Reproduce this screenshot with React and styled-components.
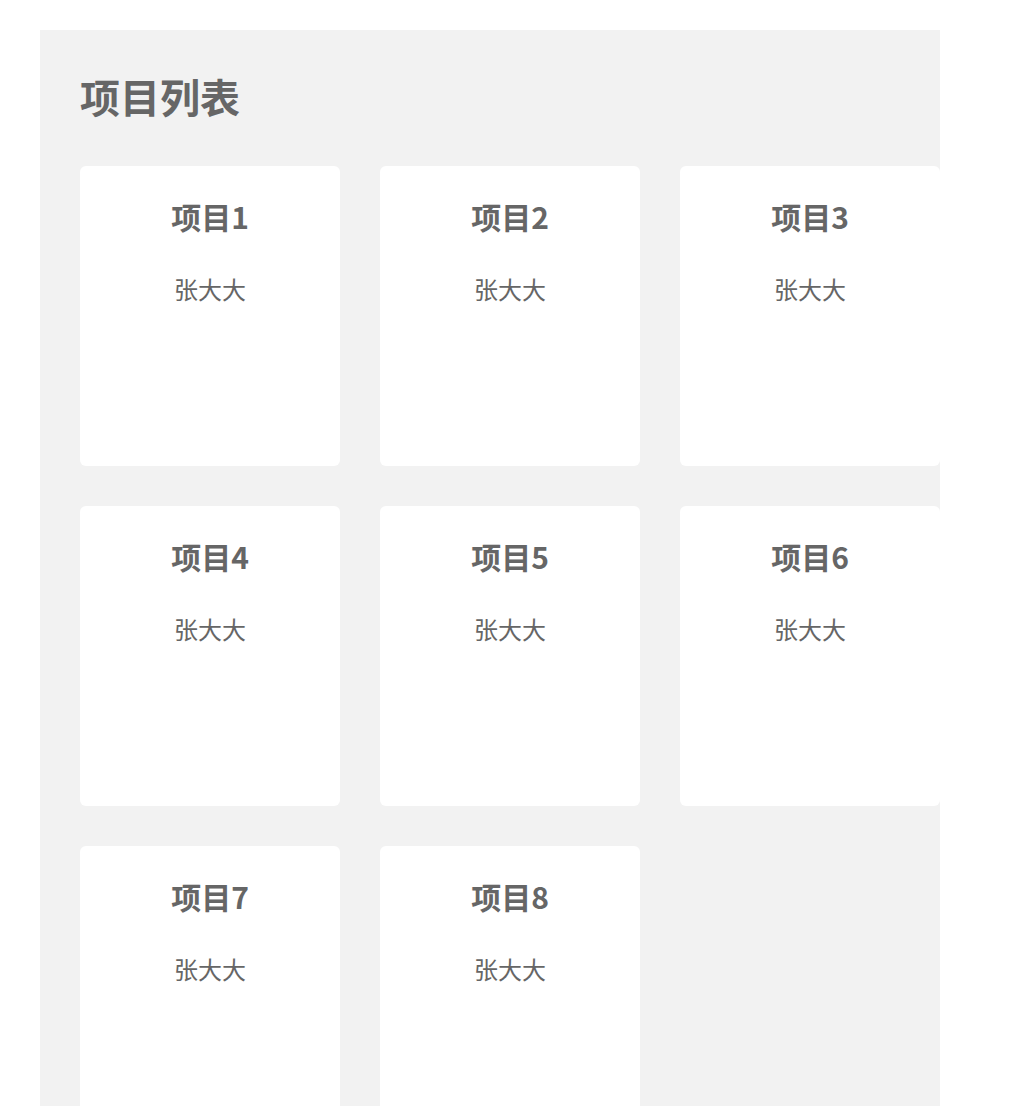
import React from "react";
import styled, { createGlobalStyle } from "styled-components";

const Global = createGlobalStyle`
  html, body { margin: 0; padding: 0; background: #fff; }
  body { font-family: "Noto Sans CJK SC", "Noto Sans", sans-serif; }
`;

const Page = styled.div`
  padding: 30px 70px 0 40px;
`;

const Panel = styled.section`
  background: #f2f2f2;
  padding: 43px 0 60px 40px;
  min-height: 1100px;
  box-sizing: border-box;
`;

const Heading = styled.h1`
  margin: 0 0 47px;
  font-size: 40px;
  line-height: 46px;
  font-weight: 700;
  color: #666;
`;

const Grid = styled.div`
  display: grid;
  grid-template-columns: repeat(3, 260px);
  gap: 40px;
`;

const Card = styled.div`
  background: #fff;
  border-radius: 6px;
  height: 300px;
  box-sizing: border-box;
  padding-top: 32px;
  display: flex;
  flex-direction: column;
  align-items: center;
`;

const Title = styled.div`
  font-size: 30px;
  line-height: 36px;
  font-weight: 700;
  color: #666;
`;

const Owner = styled.div`
  margin-top: 41px;
  font-size: 24px;
  line-height: 28px;
  color: #666;
`;

const items = Array.from({ length: 8 }, (_, i) => ({ name: `项目${i + 1}`, owner: "张大大" }));

export default function App() {
  return (
    <>
      <Global />
      <Page>
        <Panel>
          <Heading>项目列表</Heading>
          <Grid>
            {items.map((it) => (
              <Card key={it.name}>
                <Title>{it.name}</Title>
                <Owner>{it.owner}</Owner>
              </Card>
            ))}
          </Grid>
        </Panel>
      </Page>
    </>
  );
}
